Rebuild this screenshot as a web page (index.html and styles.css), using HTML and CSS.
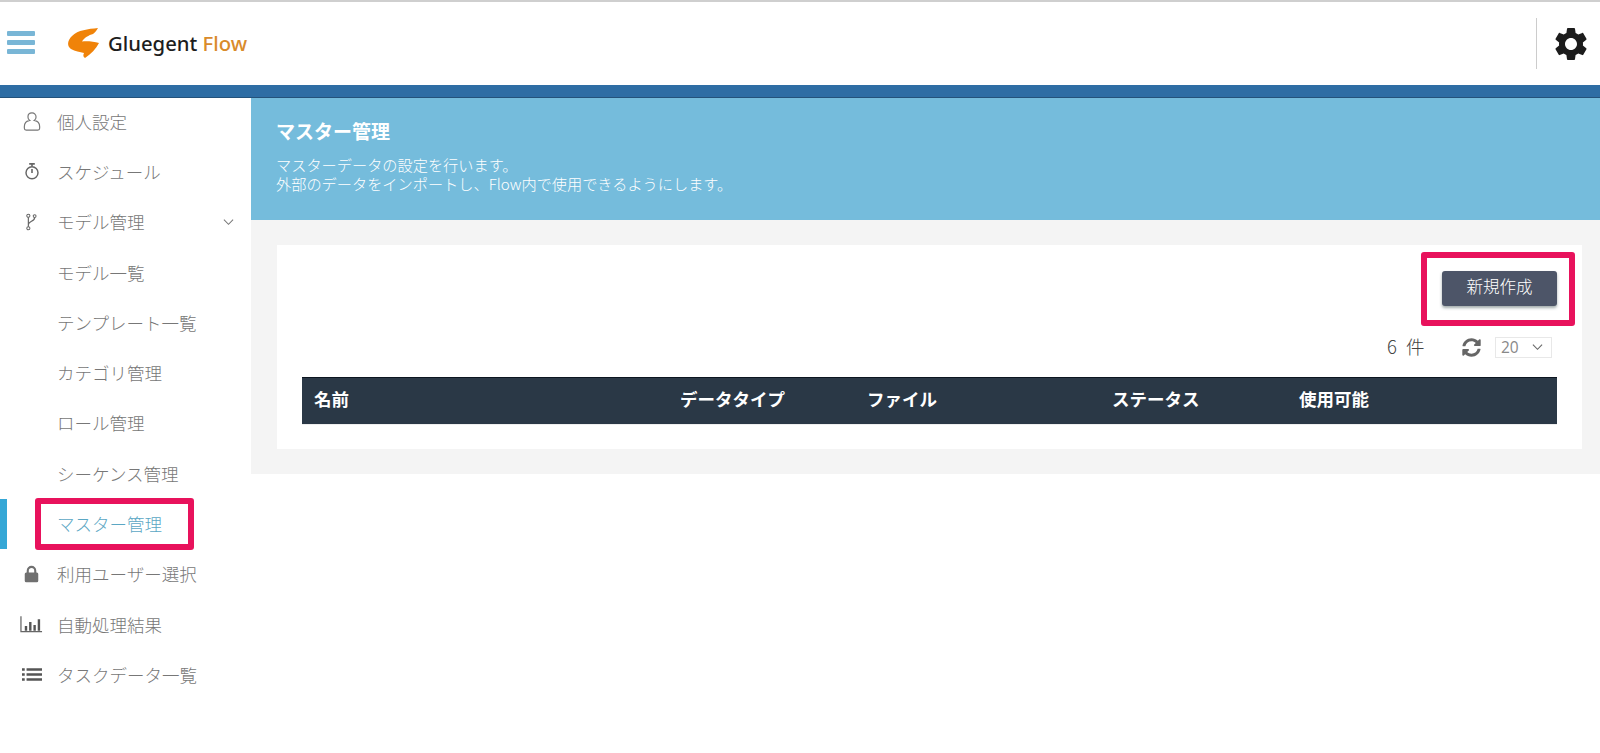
FILE: index.html
```html
<!DOCTYPE html>
<html lang="ja">
<head>
<meta charset="utf-8">
<title>マスター管理</title>
<link rel="stylesheet" href="styles.css">
</head>
<body>
<header class="topbar">
  <div class="brand">
    <div class="burger"><span></span><span></span><span></span></div>
    <svg class="logo-mark" viewBox="0 0 34 32"><path d="M32 1C22 2 12 3 6 9C1 14 1 19 5 22C9 24.500 14 25 18 26C17 28 17 30 19 31C25 27 30 22 33 16C28 14.500 21 14 16 14.500C18 11 23 8 27 7C29 5.500 31 3 32 1Z" fill="#f08309"/></svg>
    <span class="logo-text">Gluegent <span class="logo-flow">Flow</span></span>
  </div>
  <div class="top-actions">
    <svg class="gear" viewBox="0 0 24 24"><path fill="#1c1c1c" d="M19.140 12.940c.04-.3.06-.61.06-.94 0-.32-.02-.64-.07-.94l2.030-1.580c.18-.14.23-.41.12-.61l-1.920-3.320c-.12-.22-.37-.29-.59-.22l-2.390.96c-.5-.38-1.030-.7-1.620-.94l-.36-2.540c-.04-.24-.24-.41-.48-.41h-3.840c-.24 0-.43.17-.47.41l-.36 2.540c-.59.24-1.130.57-1.620.94l-2.390-.96c-.22-.08-.47 0-.59.22L2.740 8.870c-.12.21-.08.47.12.61l2.030 1.580c-.05.3-.09.63-.09.94s.02.64.07.94l-2.030 1.580c-.18.14-.23.41-.12.61l1.920 3.320c.12.22.37.29.59.22l2.390-.96c.5.38 1.030.7 1.620.94l.36 2.540c.05.24.24.41.48.41h3.840c.24 0 .44-.17.47-.41l.36-2.540c.59-.24 1.130-.56 1.620-.94l2.390.96c.22.08.47 0 .59-.22l1.920-3.320c.12-.22.07-.47-.12-.61l-2.010-1.580zM12 15.600c-1.980 0-3.600-1.620-3.600-3.600s1.620-3.600 3.600-3.600 3.600 1.620 3.600 3.600-1.620 3.600-3.600 3.600z"/></svg>
  </div>
</header>
<div class="band"></div>
<div class="layout">
  <aside class="sidebar">
    <nav class="nav">
      <a class="nav-item"><span class="nav-icon"><svg viewBox="0 0 20 22" class="ico-user"><path d="M10 1.500c-2.700 0-4.500 1.900-4.500 4.400 0 1.700.8 3.100 2 3.900C4 10.500 1.500 12.800 1.500 16.500v2c0 1.100.9 2 2 2h13c1.100 0 2-.9 2-2v-2c0-3.700-2.500-6-6-6.700 1.200-.8 2-2.200 2-3.900 0-2.500-1.800-4.400-4.500-4.400z" fill="none" stroke="#777" stroke-width="1.300"/></svg></span>個人設定</a>
      <a class="nav-item"><span class="nav-icon"><svg viewBox="0 0 20 22" class="ico-timer"><path d="M6.500 1.500h7M10 1.500v3" stroke="#666" stroke-width="2" fill="none"/><circle cx="10" cy="12.500" r="7.500" fill="none" stroke="#666" stroke-width="1.800"/><path d="M10 8v5" stroke="#666" stroke-width="2"/></svg></span>スケジュール</a>
      <a class="nav-item"><span class="nav-icon"><svg viewBox="0 0 14 22" class="ico-branch"><circle cx="3" cy="3" r="2" fill="none" stroke="#666" stroke-width="1.300"/><circle cx="3" cy="19" r="2" fill="none" stroke="#666" stroke-width="1.300"/><circle cx="11" cy="3.500" r="1.800" fill="none" stroke="#666" stroke-width="1.300"/><path d="M3 5v12M11 5.500c0 5-8 4-8 9" fill="none" stroke="#666" stroke-width="1.500"/></svg></span>モデル管理<svg class="chev" viewBox="0 0 12 8"><path d="M1 1.500l5 5 5-5" fill="none" stroke="#777" stroke-width="1.100"/></svg></a>
      <a class="nav-item">モデル一覧</a>
      <a class="nav-item">テンプレート一覧</a>
      <a class="nav-item">カテゴリ管理</a>
      <a class="nav-item">ロール管理</a>
      <a class="nav-item">シーケンス管理</a>
      <a class="nav-item is-active">マスター管理<span class="mark mark-nav"></span></a>
      <a class="nav-item"><span class="nav-icon"><svg viewBox="0 0 20 24" class="ico-lock"><path d="M5 11V7.500a5 5 0 0 1 10 0V11" fill="none" stroke="#707070" stroke-width="2.800"/><rect x="1" y="10" width="18" height="13" rx="2" fill="#707070"/></svg></span>利用ユーザー選択</a>
      <a class="nav-item"><span class="nav-icon"><svg viewBox="0 0 24 18" class="ico-wide"><path d="M1 1v16h22" fill="none" stroke="#666" stroke-width="1.300"/><path d="M5 11h2.500v5H5zM9.500 7H12v9H9.500zM14 10h2.500v6H14zM18.500 4H21v12h-2.500z" fill="#555"/></svg></span>自動処理結果</a>
      <a class="nav-item"><span class="nav-icon"><svg viewBox="0 0 22 16" class="ico-list"><path d="M0 1h3v3H0zM5 1h17v3H5zM0 6.500h3v3H0zM5 6.500h17v3H5zM0 12h3v3H0zM5 12h17v3H5z" fill="#555"/></svg></span>タスクデータ一覧</a>
    </nav>
  </aside>
  <main class="main">
    <section class="page-head">
      <h1 class="page-title">マスター管理</h1>
      <p class="page-desc">マスターデータの設定を行います。<br>外部のデータをインポートし、Flow内で使用できるようにします。</p>
    </section>
    <section class="content">
      <div class="card">
        <div class="actions">
          <button class="btn-new">新規作成</button>
          <span class="mark mark-btn"></span>
        </div>
        <div class="list-tools">
          <span class="count">6 件</span>
          <svg class="refresh" viewBox="0 0 512 512"><path fill="#666" d="M370.720 133.280C339.458 104.008 298.888 87.962 255.848 88c-77.458.068-144.328 53.178-162.791 126.850-1.344 5.363-6.122 9.150-11.651 9.150H24.103c-7.498 0-13.194-6.807-11.807-14.176C33.933 94.924 134.813 8 256 8c66.448 0 126.791 26.136 171.315 68.685L463.030 40.970C478.149 25.851 504 36.559 504 57.941V192c0 13.255-10.745 24-24 24H345.941c-21.382 0-32.090-25.851-16.971-40.971l41.750-41.749zM32 296h134.059c21.382 0 32.090 25.851 16.971 40.971l-41.750 41.750c31.262 29.273 71.835 45.319 114.876 45.280 77.418-.07 144.315-53.144 162.787-126.849 1.344-5.363 6.122-9.150 11.651-9.150h57.304c7.498 0 13.194 6.807 11.807 14.176C478.067 417.076 377.187 504 256 504c-66.448 0-126.791-26.136-171.315-68.685L48.970 471.030C33.851 486.149 8 475.441 8 454.059V320c0-13.255 10.745-24 24-24z"/></svg>
          <div class="page-size"><span>20</span><svg class="size-chev" viewBox="0 0 12 8"><path d="M1 1.500l5 5 5-5" fill="none" stroke="#666" stroke-width="1.200"/></svg></div>
        </div>
        <div class="table-head">
          <div>名前</div>
          <div>データタイプ</div>
          <div>ファイル</div>
          <div>ステータス</div>
          <div>使用可能</div>
        </div>
      </div>
    </section>
  </main>
</div>
</body>
</html>
```
FILE: styles.css
```css
* { box-sizing: border-box; }
html, body { margin: 0; padding: 0; height: 100%; }
body {
  background: #fff;
  color: #666;
  font-family: "Noto Sans CJK JP", "Noto Sans", sans-serif;
  overflow: hidden;
}
.topbar {
  height: 85px;
  border-top: 2px solid #cfcfcf;
  display: flex;
  align-items: center;
  justify-content: space-between;
  background: #fff;
}
.brand { display: flex; align-items: center; padding-left: 7px; margin-top: -2px; }
.burger { width: 28px; display: flex; flex-direction: column; gap: 4px; }
.burger span { display: block; height: 5px; border-radius: 1px; background: #79b6d6; }
.logo-mark { width: 34px; height: 32px; margin-left: 31px; }
.logo-text {
  margin-left: 8px;
  font-family: "Noto Sans", sans-serif;
  font-weight: 500;
  font-size: 20.300px;
  color: #1d1d1d;
}
.logo-flow { color: #d98b2b; }
.top-actions {
  height: 51px;
  width: 64px;
  border-left: 1px solid #ccc;
  display: flex;
  align-items: center;
  justify-content: center;
}
.gear { width: 40px; height: 40px; margin-left: 5px; }
.band { height: 13px; background: #2e6da4; border-bottom: 1px solid #24527a; }
.layout { display: flex; }
.sidebar { width: 251px; flex: none; background: #fff; }
.nav { margin-top: -1px; }
.nav-item {
  position: relative;
  display: flex;
  align-items: center;
  height: 50.300px;
  padding-left: 57px;
  padding-bottom: 2px;
  font-size: 17.500px;
  font-weight: 300;
  color: #777;
  white-space: nowrap;
}
.nav-icon {
  position: absolute;
  left: 0;
  width: 63px;
  display: flex;
  justify-content: center;
}
.ico-user { width: 18px; height: 21px; }
.ico-timer { width: 16px; height: 19px; }
.ico-branch { width: 11px; height: 18px; }
.ico-lock { width: 15px; height: 18px; }
.ico-wide { width: 23px; height: 18px; }
.ico-list { width: 20px; height: 15px; }
.chev { position: absolute; left: 223px; width: 11px; height: 8px; }
.is-active { color: #5ba7c4; }
.is-active::before {
  content: "";
  position: absolute;
  left: 0;
  top: 0;
  width: 7px;
  height: 50px;
  background: #35a7d6;
}
.mark {
  position: absolute;
  border: 6px solid #e8125c;
  border-radius: 3px;
  pointer-events: none;
}
.mark-nav { left: 35px; top: -1px; width: 159px; height: 52px; }
.mark-btn { right: -18px; top: -19px; width: 154px; height: 74px; }
.main { flex: 1; min-width: 0; }
.page-head { height: 122px; background: #75bcdc; color: #fff; padding: 19px 25px 0; }
.page-title { margin: 0; font-size: 19px; line-height: 28px; font-weight: 700; }
.page-desc { margin: 10px 0 0; font-size: 15.200px; line-height: 19px; font-weight: 300; }
.content { background: #f4f4f4; padding: 25px 18px 25px 26px; }
.card { background: #fff; padding: 26px 25px 25px; }
.actions { position: relative; display: flex; justify-content: flex-end; }
.btn-new {
  width: 115px;
  height: 35px;
  background: #4d5568;
  color: #fff;
  border: 0;
  border-radius: 3px;
  box-shadow: 0 2px 3px rgba(70, 90, 90, .5);
  font-family: inherit;
  font-size: 16.500px;
  font-weight: 300;
  padding: 0 0 5px;
}
.list-tools { display: flex; align-items: center; height: 71px; padding-top: 11px; }
.count { margin-left: auto; font-size: 18.500px; font-weight: 300; color: #444; letter-spacing: 1.500px; word-spacing: 2px; padding-bottom: 3px; }
.refresh { width: 19px; height: 19px; margin-left: 36px; }
.page-size {
  width: 57px;
  height: 21px;
  margin-left: 14px;
  margin-right: 5px;
  border: 1px solid #e8e8e8;
  display: flex;
  align-items: center;
  justify-content: space-between;
  padding: 0 8px 0 5px;
  font-family: "Open Sans", sans-serif;
  font-size: 15.500px;
  color: #888;
}
.size-chev { width: 11px; height: 8px; }
.table-head {
  display: grid;
  grid-template-columns: 366px 187px 245px 187px 1fr;
  align-items: center;
  height: 47px;
  padding-left: 12px;
  padding-bottom: 5px;
  background: #2a3846;
  border-top: 1px solid #0d1620;
  box-shadow: 0 1px 0 #eee;
  color: #fff;
  font-size: 17.500px;
  font-weight: 700;
}
```
